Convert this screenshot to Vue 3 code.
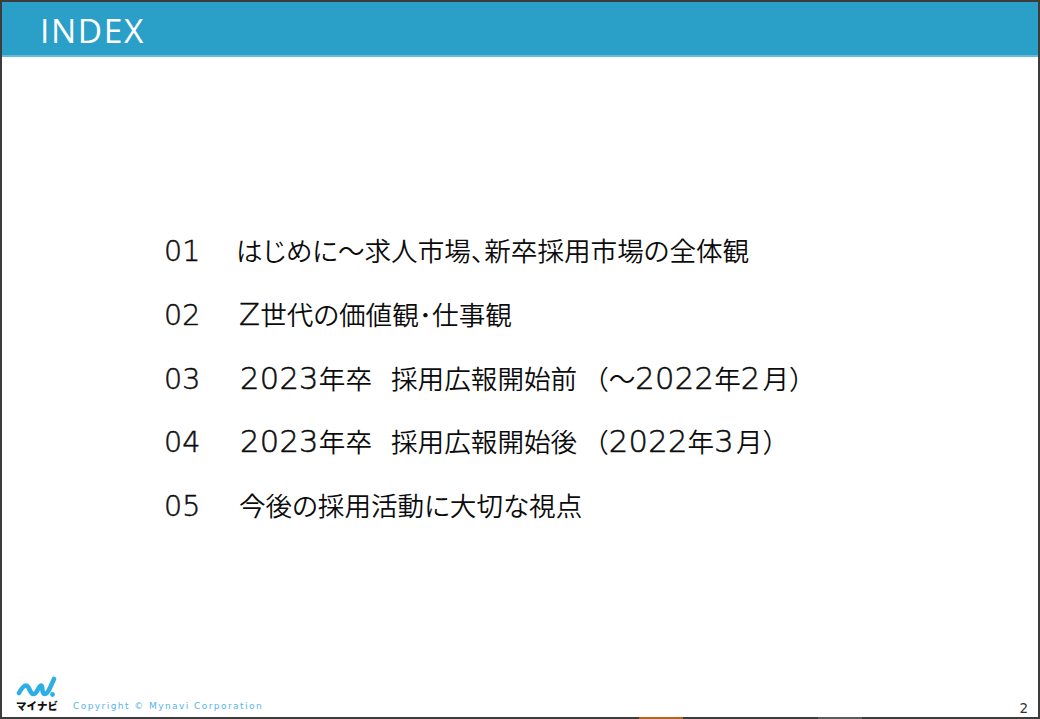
<script setup>
const items = [
  { no: '01', cls: 'first', parts: [{ t: 'はじめに～求人市場、新卒採用市場の全体観' }] },
  { no: '02', cls: 'tight', parts: [{ t: 'Z', c: 'lat' }, { t: '世代の価値観･仕事観' }] },
  { no: '03', cls: '', parts: [
    { t: '2023', c: 'lat' }, { t: '年卒' }, { t: '採用広報開始前', c: 'after' },
    { t: '（～', c: 'wide open' }, { t: '2022', c: 'lat' }, { t: '年' }, { t: '2', c: 'lat' }, { t: '月）', c: 'wide' },
  ] },
  { no: '04', cls: '', parts: [
    { t: '2023', c: 'lat' }, { t: '年卒' }, { t: '採用広報開始後', c: 'after' },
    { t: '（', c: 'wide open' }, { t: '2022', c: 'lat' }, { t: '年' }, { t: '3', c: 'lat' }, { t: '月）', c: 'wide' },
  ] },
  { no: '05', cls: 'tight', parts: [{ t: '今後の採用活動に大切な視点' }] },
]
</script>

<template>
  <div class="slide">
    <header class="head"><span class="title">INDEX</span></header>
    <main class="body">
      <ol class="list">
        <li v-for="i in items" :key="i.no" class="row">
          <span class="no">{{ i.no }}</span>
          <span class="txt" :class="i.cls"><span v-for="(p, n) in i.parts" :key="n" :class="p.c">{{ p.t }}</span></span>
        </li>
      </ol>
    </main>
    <footer class="foot">
      <div class="logo">
        <svg width="42" height="24" viewBox="0 0 42 24">
          <path d="M3 17 C5.500 12.500 7.500 9.500 10 9.500 C13.500 9.500 13.500 18 17.500 18 C21.500 18 22.500 9.500 25 9.500 C27.500 9.500 25 18 28.500 18 C32.500 18 35 9 38 3" fill="none" stroke="#2daee6" stroke-width="4.600" stroke-linecap="round" stroke-linejoin="round"/>
          <circle cx="36.500" cy="18.500" r="2.400" fill="#2daee6"/>
        </svg>
        <span class="kana">マイナビ</span>
      </div>
      <span class="copy">Copyright © Mynavi Corporation</span>
      <span class="page">2</span>
    </footer>
    <div class="edge">
      <i class="seg orange"></i>
      <i class="seg grey"></i>
    </div>
  </div>
</template>

<style>
html, body { margin: 0; background: #fff; }
</style>

<style scoped>
.slide {
  width: 1040px;
  height: 719px;
  box-sizing: border-box;
  border: solid #3c3c3c;
  border-width: 2px 2px 0 2px;
  display: flex;
  flex-direction: column;
  position: relative;
  background: #fff;
  overflow: hidden;
  font-family: "Noto Sans CJK JP", "Noto Sans", sans-serif;
}
.head {
  height: 55px;
  box-sizing: border-box;
  background: #2a9fc8;
  border-bottom: 2px solid #62bddc;
  padding: 5px 0 0 38px;
  display: flex;
  align-items: center;
  flex: none;
}
.title {
  color: #fff;
  font-size: 33.500px;
  line-height: 1;
  letter-spacing: 1.600px;
  font-family: "Open Sans", "Noto Sans", sans-serif;
}
.body { flex: 1; min-height: 0; padding: 172.500px 0 0 162px; }
.list { list-style: none; margin: 0; padding: 0; display: flex; flex-direction: column; gap: 23.800px; }
.row { display: flex; align-items: center; height: 40px; color: #0c0c0c; font-size: 26.600px; font-weight: 350; }
.no {
  width: 76px;
  flex: none;
  padding-top: 4px;
  font-family: "DejaVu Sans", sans-serif;
  font-weight: 200;
  font-size: 28.500px;
  -webkit-text-stroke: 0.5px #0c0c0c;
}
.txt { font-feature-settings: "palt"; white-space: pre; }
.lat {
  font-family: "DejaVu Sans", sans-serif;
  font-weight: 200;
  font-size: 30.500px;
  letter-spacing: 0.300px;
  line-height: 1;
  -webkit-text-stroke: 0.5px #0c0c0c;
}
.wide { font-feature-settings: "palt" 0; margin-left: 2px; }
.open { margin-left: 5px; }
.after { margin-left: 19px; }
.first { margin-left: -4px; }
.tight { margin-left: -1px; }
.foot {
  height: 50px;
  flex: none;
  display: flex;
  align-items: flex-end;
  padding: 0 10px 5px 14px;
  position: relative;
}
.logo { width: 42px; display: flex; flex-direction: column; align-items: center; }
.logo svg { display: block; }
.kana { font-size: 10.500px; line-height: 12px; font-weight: 900; color: #111; white-space: nowrap; }
.copy {
  margin: 0 0 -1px 15px;
  font-size: 9px;
  letter-spacing: 1.440px;
  color: #55b4ee;
  line-height: 14px;
  font-family: "DejaVu Sans", sans-serif;
}
.page { margin: 0 0 -3px auto; font-size: 13.500px; line-height: 14px; color: #333; font-family: "DejaVu Sans", sans-serif; }
.edge { height: 2px; flex: none; background: #3c3c3c; display: flex; padding-left: 637px; }
.seg { display: block; width: 44px; height: 2px; }
.orange { background: #b5651d; }
.grey { background: #5c5c5c; margin-left: 135px; }
</style>
